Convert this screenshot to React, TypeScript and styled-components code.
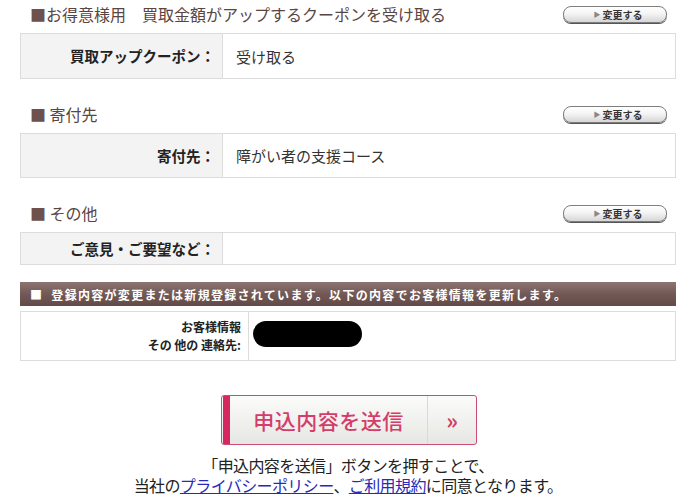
import React from 'react';
import styled, { createGlobalStyle } from 'styled-components';

const GlobalStyle = createGlobalStyle`
  body {
    margin: 0;
    background: #fff;
    font-family: "Noto Sans CJK JP", "Noto Sans", sans-serif;
    color: #333;
  }
`;

const Page = styled.div`
  width: 656px;
  padding: 0 17px 0 20px;
`;

const Section = styled.section<{ $last?: boolean }>`
  margin-bottom: ${p => (p.$last ? '17px' : '21px')};
`;

const HeadRow = styled.div`
  height: 28px;
  margin-bottom: 5px;
  padding: 0 9px 0 10px;
  display: flex;
  align-items: center;
  justify-content: space-between;
`;

const Heading = styled.h2`
  margin: 0;
  font-size: 16px;
  font-weight: normal;
  color: #5a4541;
  span {
    color: #6e504c;
  }
`;

const ChangeButton = styled.button`
  width: 104px;
  height: 17px;
  padding: 0 0 0 6px;
  border: 1px solid #7e7e7e;
  border-radius: 8px;
  background: linear-gradient(#ffffff 0%, #f4f4f4 45%, #d6d6d6 100%);
  box-shadow: 0 1px 0 #555;
  display: flex;
  align-items: center;
  justify-content: center;
  gap: 2px;
  font-family: "Noto Sans CJK JP", sans-serif;
  font-size: 10px;
  font-weight: bold;
  color: #333;
  cursor: pointer;
  i {
    font-style: normal;
    font-size: 7px;
    color: #888;
  }
`;

const Table = styled.div<{ $height: number; $label: number }>`
  display: grid;
  grid-template-columns: ${p => p.$label}px 1fr;
  height: ${p => p.$height}px;
  border: 1px solid #dcdcdc;
  box-sizing: border-box;
`;

const Label = styled.div<{ $bg?: string; $small?: boolean }>`
  background: ${p => p.$bg || '#f3f3f3'};
  border-right: 1px solid #dcdcdc;
  display: flex;
  flex-direction: column;
  align-items: flex-end;
  justify-content: center;
  padding-right: ${p => (p.$small ? '7px' : '7px')};
  font-size: ${p => (p.$small ? '12px' : '14.5px')};
  line-height: ${p => (p.$small ? '18px' : '20px')};
  font-weight: bold;
  color: #222;
  text-align: right;
`;

const Value = styled.div<{ $pad?: number }>`
  display: flex;
  align-items: center;
  padding-left: ${p => (p.$pad ?? 13)}px;
  font-size: 15px;
  color: #333;
`;

const Banner = styled.div`
  height: 24px;
  margin-bottom: 5px;
  padding-left: 10px;
  display: flex;
  align-items: center;
  background: linear-gradient(#8c7471 0%, #725955 50%, #634a47 100%);
  color: #fff;
  font-size: 12px;
  font-weight: bold;
  letter-spacing: 1.3px;
  white-space: nowrap;
`;

const Mask = styled.div`
  width: 109px;
  height: 26px;
  margin-bottom: 5px;
  border-radius: 13px;
  background: #000;
`;

const SubmitWrap = styled.div`
  display: flex;
  justify-content: center;
  margin-top: 34px;
  padding-left: 2px;
`;

const Submit = styled.button`
  width: 256px;
  height: 50px;
  padding: 0;
  border: 1px solid #cc4b72;
  border-radius: 3px;
  background: linear-gradient(#fbfbfa 0%, #f1f1ef 50%, #e6e6e3 100%);
  display: grid;
  grid-template-columns: 1fr 48px;
  cursor: pointer;
  font-family: "Noto Sans CJK JP", sans-serif;
  color: #d43c6a;
  overflow: hidden;
`;

const SubmitMain = styled.span`
  display: flex;
  align-items: center;
  justify-content: center;
  height: 100%;
  border-left: 7px solid #d7275f;
  margin-left: 1px;
  box-sizing: border-box;
  font-size: 21px;
  font-weight: 500;
  letter-spacing: 0.5px;
  border-right: 1px solid #d9d9d6;
`;

const SubmitArrow = styled.span`
  display: flex;
  align-items: center;
  justify-content: center;
  font-size: 22px;
  font-weight: bold;
  padding-bottom: 3px;
`;

const Note = styled.p`
  margin: 10px 0 0;
  text-align: center;
  font-size: 16px;
  line-height: 20px;
  letter-spacing: -0.6px;
  color: #222;
  a {
    color: #2a2ab8;
    text-decoration: underline;
  }
`;

const sections = [
  { title: 'お得意様用\u3000買取金額がアップするクーポンを受け取る', gap: false, label: '買取アップクーポン：', value: '受け取る', height: 46 },
  { title: '寄付先', gap: true, label: '寄付先：', value: '障がい者の支援コース', height: 45 },
  { title: 'その他', gap: true, label: 'ご意見・ご要望など：', value: '', height: 33 },
];

export default function App() {
  return (
    <Page>
      <GlobalStyle />
      {sections.map((s, i) => (
        <Section key={`section_${i}`} $last={i === sections.length - 1}>
          <HeadRow>
            <Heading><span>■</span>{s.gap ? ' ' : ''}{s.title}</Heading>
            <ChangeButton><i>▶</i>変更する</ChangeButton>
          </HeadRow>
          <Table $height={s.height} $label={202}>
            <Label>{s.label}</Label>
            <Value>{s.value}</Value>
          </Table>
        </Section>
      ))}
      <Banner>■&nbsp; 登録内容が変更または新規登録されています。以下の内容でお客様情報を更新します。</Banner>
      <Table $height={50} $label={228}>
        <Label $bg="#fff" $small>
          <span>お客様情報</span>
          <span>その 他の 連絡先:</span>
        </Label>
        <Value $pad={4}>
          <Mask />
        </Value>
      </Table>
      <SubmitWrap>
        <Submit>
          <SubmitMain>申込内容を送信</SubmitMain>
          <SubmitArrow>»</SubmitArrow>
        </Submit>
      </SubmitWrap>
      <Note>
        「申込内容を送信」ボタンを押すことで、<br />
        当社の<a href="#">プライバシーポリシー</a>、<a href="#">ご利用規約</a>に同意となります。
      </Note>
    </Page>
  );
}
